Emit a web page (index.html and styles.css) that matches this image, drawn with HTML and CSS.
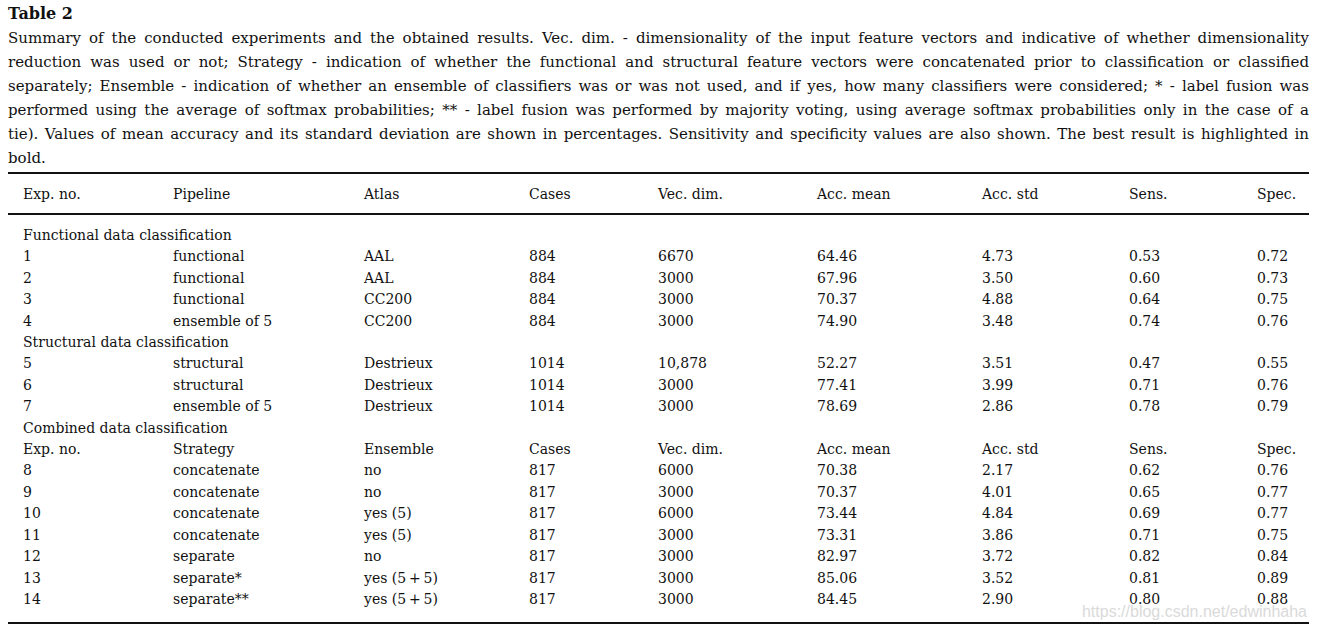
FILE: index.html
```html
<!DOCTYPE html>
<html>
<head>
<meta charset="utf-8">
<link rel="stylesheet" href="styles.css">
</head>
<body>
<div class="page">
  <div class="title">Table 2</div>
  <div class="caption">
    <span class="line">Summary of the conducted experiments and the obtained results. Vec. dim. - dimensionality of the input feature vectors and indicative of whether dimensionality</span>
    <span class="line">reduction was used or not; Strategy - indication of whether the functional and structural feature vectors were concatenated prior to classification or classified</span>
    <span class="line">separately; Ensemble - indication of whether an ensemble of classifiers was or was not used, and if yes, how many classifiers were considered; * - label fusion was</span>
    <span class="line">performed using the average of softmax probabilities; ** - label fusion was performed by majority voting, using average softmax probabilities only in the case of a</span>
    <span class="line">tie). Values of mean accuracy and its standard deviation are shown in percentages. Sensitivity and specificity values are also shown. The best result is highlighted in</span>
    <span class="line last">bold.</span>
  </div>
  <table class="results">
    <colgroup>
      <col class="c1"><col class="c2"><col class="c3"><col class="c4"><col class="c5"><col class="c6"><col class="c7"><col class="c8"><col class="c9">
    </colgroup>
    <thead>
      <tr><th>Exp. no.</th><th>Pipeline</th><th>Atlas</th><th>Cases</th><th>Vec. dim.</th><th>Acc. mean</th><th>Acc. std</th><th>Sens.</th><th>Spec.</th></tr>
    </thead>
    <tbody>
      <tr class="first"><td colspan="9">Functional data classification</td></tr>
      <tr><td>1</td><td>functional</td><td>AAL</td><td>884</td><td>6670</td><td>64.46</td><td>4.73</td><td>0.53</td><td>0.72</td></tr>
      <tr><td>2</td><td>functional</td><td>AAL</td><td>884</td><td>3000</td><td>67.96</td><td>3.50</td><td>0.60</td><td>0.73</td></tr>
      <tr><td>3</td><td>functional</td><td>CC200</td><td>884</td><td>3000</td><td>70.37</td><td>4.88</td><td>0.64</td><td>0.75</td></tr>
      <tr><td>4</td><td>ensemble of 5</td><td>CC200</td><td>884</td><td>3000</td><td>74.90</td><td>3.48</td><td>0.74</td><td>0.76</td></tr>
      <tr><td colspan="9">Structural data classification</td></tr>
      <tr><td>5</td><td>structural</td><td>Destrieux</td><td>1014</td><td>10,878</td><td>52.27</td><td>3.51</td><td>0.47</td><td>0.55</td></tr>
      <tr><td>6</td><td>structural</td><td>Destrieux</td><td>1014</td><td>3000</td><td>77.41</td><td>3.99</td><td>0.71</td><td>0.76</td></tr>
      <tr><td>7</td><td>ensemble of 5</td><td>Destrieux</td><td>1014</td><td>3000</td><td>78.69</td><td>2.86</td><td>0.78</td><td>0.79</td></tr>
      <tr><td colspan="9">Combined data classification</td></tr>
      <tr><td>Exp. no.</td><td>Strategy</td><td>Ensemble</td><td>Cases</td><td>Vec. dim.</td><td>Acc. mean</td><td>Acc. std</td><td>Sens.</td><td>Spec.</td></tr>
      <tr><td>8</td><td>concatenate</td><td>no</td><td>817</td><td>6000</td><td>70.38</td><td>2.17</td><td>0.62</td><td>0.76</td></tr>
      <tr><td>9</td><td>concatenate</td><td>no</td><td>817</td><td>3000</td><td>70.37</td><td>4.01</td><td>0.65</td><td>0.77</td></tr>
      <tr><td>10</td><td>concatenate</td><td>yes (5)</td><td>817</td><td>6000</td><td>73.44</td><td>4.84</td><td>0.69</td><td>0.77</td></tr>
      <tr><td>11</td><td>concatenate</td><td>yes (5)</td><td>817</td><td>3000</td><td>73.31</td><td>3.86</td><td>0.71</td><td>0.75</td></tr>
      <tr><td>12</td><td>separate</td><td>no</td><td>817</td><td>3000</td><td>82.97</td><td>3.72</td><td>0.82</td><td>0.84</td></tr>
      <tr><td>13</td><td>separate*</td><td>yes (5&#8201;+&#8201;5)</td><td>817</td><td>3000</td><td>85.06</td><td>3.52</td><td>0.81</td><td>0.89</td></tr>
      <tr class="last"><td>14</td><td>separate**</td><td>yes (5&#8201;+&#8201;5)</td><td>817</td><td>3000</td><td>84.45</td><td>2.90</td><td>0.80</td><td>0.88</td></tr>
    </tbody>
  </table>
  <div class="watermark">https://blog.csdn.net/edwinhaha</div>
</div>
</body>
</html>
```
FILE: styles.css
```css
html, body {
  margin: 0;
  padding: 0;
  background: #ffffff;
}
.page {
  position: relative;
  width: 1301px;
  margin: 2px 8px 0 8px;
  font-family: "DejaVu Serif", "Liberation Serif", serif;
  color: #111111;
}
.title {
  font-weight: bold;
  font-size: 16px;
  line-height: 24px;
}
.caption {
  font-size: 15px;
  line-height: 24px;
}
.caption .line {
  display: block;
  text-align: justify;
  text-align-last: justify;
  white-space: nowrap;
}
.caption .line.last {
  text-align-last: left;
}
.results {
  width: 1301px;
  border-collapse: collapse;
  margin-top: 2px;
  table-layout: fixed;
  font-size: 14px;
  border-top: 2px solid #111111;
  border-bottom: 2px solid #111111;
}
.results .c1 { width: 165px; }
.results .c2 { width: 191px; }
.results .c3 { width: 165px; }
.results .c4 { width: 129px; }
.results .c5 { width: 159px; }
.results .c6 { width: 165px; }
.results .c7 { width: 147px; }
.results .c8 { width: 128px; }
.results th,
.results td {
  text-align: left;
  font-weight: normal;
  padding: 0;
  white-space: nowrap;
}
.results th:first-child,
.results td:first-child {
  padding-left: 15px;
}
.results thead th {
  height: 39px;
  border-bottom: 2px solid #111111;
  vertical-align: middle;
}
.results tbody td {
  height: 21.4px;
  line-height: 21.4px;
}
.results tbody tr.first td {
  padding-top: 10px;
}
.results tbody tr.last td {
  padding-bottom: 12px;
}
.watermark {
  position: absolute;
  right: 2px;
  bottom: 3px;
  font-family: "Liberation Sans", Arial, sans-serif;
  font-size: 16px;
  line-height: 18px;
  color: #dadada;
}
```
